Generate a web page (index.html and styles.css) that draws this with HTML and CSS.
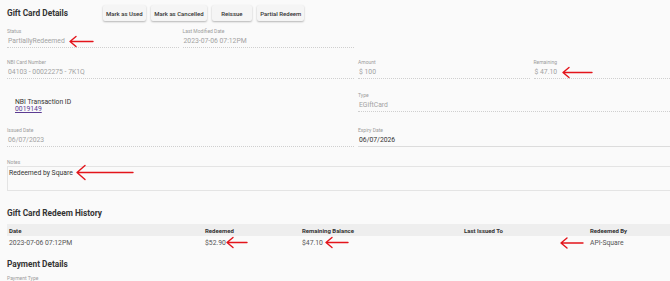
FILE: index.html
```html
<!DOCTYPE html>
<html lang="en">
<head>
    <meta charset="UTF-8">
    <meta name="viewport" content="width=device-width, initial-scale=1.0">
    <title>Gift Card Details</title>
    <link rel="stylesheet" href="styles.css">
</head>
<body>
    <div class="page">
        <div class="card-header">
            <h2 class="section-title title-main">Gift Card Details</h2>
            <div class="actions">
                <button class="btn">Mark as Used</button>
                <button class="btn">Mark as Cancelled</button>
                <button class="btn">Reissue</button>
                <button class="btn">Partial Redeem</button>
            </div>
        </div>

        <div class="details">
            <div class="detail-row row-1">
                <div class="field">
                    <div class="field-label">Status</div>
                    <div class="field-value">PartiallyRedeemed</div>
                </div>
                <div class="field">
                    <div class="field-label">Last Modified Date</div>
                    <div class="field-value">2023-07-06 07:12PM</div>
                </div>
            </div>

            <div class="detail-row row-2">
                <div class="field span-2">
                    <div class="field-label">NBI Card Number</div>
                    <div class="field-value">04103 - 00022275 - 7K1Q</div>
                </div>
                <div class="field">
                    <div class="field-label">Amount</div>
                    <div class="field-value">$ 100</div>
                </div>
                <div class="field">
                    <div class="field-label">Remaining</div>
                    <div class="field-value">$ 47.10</div>
                </div>
            </div>

            <div class="detail-row row-3">
                <div class="transaction span-2">
                    <div class="transaction-name">NBI Transaction ID</div>
                    <a class="transaction-link" href="#">0019149</a>
                </div>
                <div class="field span-2">
                    <div class="field-label">Type</div>
                    <div class="field-value">EGiftCard</div>
                </div>
            </div>

            <div class="detail-row row-4">
                <div class="field span-2">
                    <div class="field-label">Issued Date</div>
                    <div class="field-value">06/07/2023</div>
                </div>
                <div class="field field-solid span-2">
                    <div class="field-label">Expiry Date</div>
                    <div class="field-value">06/07/2026</div>
                </div>
            </div>
        </div>

        <div class="notes">
            <div class="field-label">Notes</div>
            <div class="notes-box">Redeemed by Square</div>
        </div>

        <h2 class="section-title title-history">Gift Card Redeem History</h2>
        <div class="history">
            <div class="history-row history-head">
                <div>Date</div>
                <div>Redeemed</div>
                <div>Remaining Balance</div>
                <div>Last Issued To</div>
                <div>Redeemed By</div>
            </div>
            <div class="history-row">
                <div>2023-07-06 07:12PM</div>
                <div>$52.90</div>
                <div>$47.10</div>
                <div></div>
                <div>API-Square</div>
            </div>
        </div>

        <h2 class="section-title title-payment">Payment Details</h2>
        <div class="field-label payment-type">Payment Type</div>
    </div>

    <!-- fleches rouges par-dessus la capture -->
    <svg class="arrows" width="670" height="281" viewBox="0 0 670 281">
        <g fill="none" stroke="#e3141b" stroke-width="1.4" stroke-linecap="round" stroke-linejoin="round">
            <path d="M70 41.5 H93 M76 36.5 L70 41.5 L76 46.5"/>
            <path d="M563 72.5 H592 M569 67.5 L563 72.5 L569 77.5"/>
            <path d="M77 172.5 H133 M85 165.5 L77 172.5 L85 179.5"/>
            <path d="M227 242.5 H247 M233 237.5 L227 242.5 L233 247.5"/>
            <path d="M326 242.5 H348 M332 237.5 L326 242.5 L332 247.5"/>
            <path d="M561 243 H583 M567 238 L561 243 L567 248"/>
        </g>
    </svg>
</body>
</html>
```

FILE: styles.css
```css
html {
    overflow: hidden;
}

body {
    margin: 0;
    background-color: #fafafa;
    font-family: Roboto, "Liberation Sans", Arial, sans-serif;
    color: #333;
}

.page {
    width: 693px;
    padding-left: 7px;
}

/* En-tete avec les boutons */
.card-header {
    display: flex;
    align-items: center;
    height: 16px;
    padding-top: 5px;
}

.section-title {
    margin: 0;
    font-size: 8.3px;
    font-weight: 700;
    line-height: 11px;
    color: #333;
}

.title-main {
    width: 96px;
}

.actions {
    display: flex;
    gap: 5.5px;
}

.btn {
    height: 16px;
    min-width: 39.5px;
    padding: 0 3px;
    border: none;
    border-radius: 2px;
    background-color: #f5f5f5;
    box-shadow: 0 1px 2px rgba(0, 0, 0, 0.28);
    font-family: Roboto, sans-serif;
    font-size: 6px;
    font-weight: 500;
    color: #333;
}

/* Champs */
.details {
    margin-top: 7px;
}

.detail-row {
    display: grid;
    grid-template-columns: 171.5px 171.5px 171.5px 1fr;
    column-gap: 4px;
    align-items: start;
}

.row-1 { margin-bottom: 11px; }
.row-2 { margin-bottom: 12.5px; }
.row-3 { margin-bottom: 11px; }
.row-4 { margin-bottom: 12px; }

.span-2 {
    grid-column: span 2;
}

.field {
    padding-bottom: 1px;
    border-bottom: 1px dotted #cfcfcf;
}

.field-solid {
    border-bottom: 1px solid #dcdcdc;
}

.field-label {
    font-size: 5px;
    line-height: 6px;
    color: #9c9c9c;
}

.field-value {
    margin-top: 3px;
    padding-left: 1px;
    font-size: 6.8px;
    line-height: 9px;
    color: #a2a2a2;
}

.field-solid .field-value {
    color: #333;
}

.transaction {
    padding: 7px 0 3.5px 8px;
    font-size: 6.8px;
    line-height: 7px;
}

.transaction-name {
    color: #333;
}

.transaction-link {
    color: #5c3c92;
    text-decoration: underline;
}

/* Notes */
.notes-box {
    height: 21px;
    margin-top: 1px;
    padding: 2px 1px 0;
    border: 1px solid #e4e4e4;
    font-size: 6.8px;
    line-height: 8px;
    color: #333;
}

/* Historique */
.title-history {
    margin-top: 17px;
}

.history {
    margin-top: 5px;
}

.history-row {
    display: grid;
    grid-template-columns: 196px 97px 162px 126px 1fr;
    height: 14px;
    align-items: center;
    font-size: 6.8px;
    color: #555;
}

.history-row div {
    padding-left: 2px;
}

.history-head {
    height: 12px;
    background-color: #eeeeee;
    font-size: 6px;
    font-weight: 700;
    color: #333;
}

.title-payment {
    margin-top: 9px;
}

.payment-type {
    margin-top: 4.5px;
}

/* Fleches */
.arrows {
    position: absolute;
    top: 0;
    left: 0;
    pointer-events: none;
}
```
